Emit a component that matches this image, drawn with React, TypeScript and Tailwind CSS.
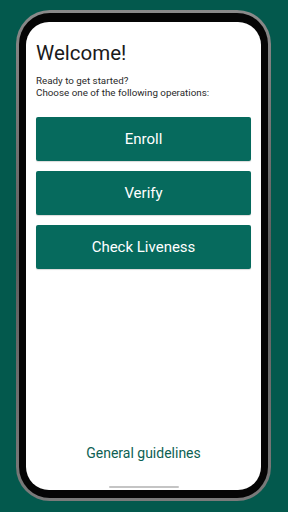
const actions = ['Enroll', 'Verify', 'Check Liveness']

export default function App() {
  return (
    <div
      className="w-[288px] h-[512px] bg-[#03594d] pt-[10px] pl-[16px] overflow-hidden"
      style={{ fontFamily: 'Roboto, "Liberation Sans", sans-serif' }}
    >
      {/* phone frame */}
      <div className="w-[255px] h-[491px] rounded-[34px] bg-gradient-to-b from-[#8a8a8a] via-[#5e5e5e] to-[#7a7a7a] p-[3px]">
        <div className="h-full rounded-[31px] bg-[#050505] pt-[9px] pb-[8px] px-[7px]">
          <div className="h-full rounded-[23px] bg-white flex flex-col px-[10px] overflow-hidden">
            <h1 className="mt-[17px] text-[20.5px] leading-[28px] text-[#1a1a1a] font-normal">Welcome!</h1>
            <p className="mt-[8px] text-[9.8px] leading-[11.5px] text-[#2a2a2a]">
              Ready to get started?
              <br />
              Choose one of the following operations:
            </p>
            <div className="mt-[19px] flex flex-col gap-[10px]">
              {actions.map(label => (
                <button
                  key={label}
                  className="h-[44px] w-full rounded-[2px] bg-[#066a5d] text-white text-[15px] shadow-[0_1px_1px_rgba(0,0,0,0.15)]"
                >
                  {label}
                </button>
              ))}
            </div>
            <div className="mt-auto text-center text-[14px] leading-[20px] text-[#0d5f53]">General guidelines</div>
            <div className="mt-[23px] mb-[2px] mx-auto h-[2px] w-[70px] rounded-full bg-[#c4c4c4]" />
          </div>
        </div>
      </div>
    </div>
  )
}
